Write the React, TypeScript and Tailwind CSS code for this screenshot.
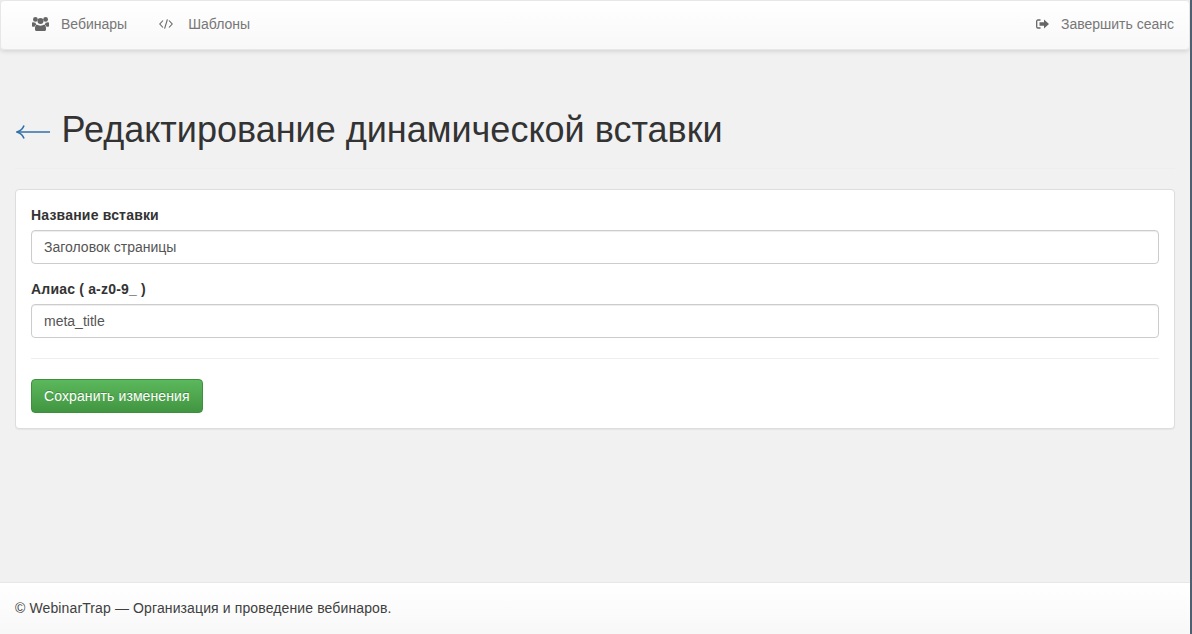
import React from 'react';

const UsersIcon = () => (
  <svg width="17" height="14" viewBox="0 0 17 14" fill="#666" className="ml-[2px] mr-[12px]">
    <circle cx="3.4" cy="2.4" r="2.4" />
    <circle cx="13.6" cy="2.4" r="2.4" />
    <circle cx="8.5" cy="4" r="3" />
    <path d="M0 6.2c0-.7.6-1 1.2-.9.7.3 1.5.5 2.4.4-.1.7.2 1.4.7 2-.9.3-1.5 1-1.8 2H1c-.6 0-1-.4-1-1z" />
    <path d="M17 6.2c0-.7-.6-1-1.2-.9-.7.3-1.5.5-2.4.4.1.7-.2 1.4-.7 2 .9.3 1.5 1 1.8 2H16c.6 0 1-.4 1-1z" />
    <path d="M4.9 7.6c.9.8 2.2 1.1 3.6 1.1s2.7-.3 3.6-1.1c1.100.4 1.900 1.700 1.900 3.400v1.500c0 .9-.6 1.500-1.500 1.500h-8c-.9 0-1.500-.6-1.500-1.500V11c0-1.700.8-3 1.900-3.400z" />
  </svg>
);

const CodeIcon = () => (
  <svg width="14" height="10" viewBox="0 0 14 10" fill="none" stroke="#666" strokeWidth="1.100" className="ml-[2px] mr-[15px]">
    <path d="M4 1.500L.8 5 4 8.500" />
    <path d="M10 1.500L13.200 5 10 8.500" />
    <path d="M8.400.3L5.600 9.700" />
  </svg>
);

const SignOutIcon = () => (
  <svg width="13" height="10" viewBox="0 0 13 10" className="mr-[12px]">
    <path d="M4.500 1H2C1.200 1 .7 1.500.7 2.300v5.400C.7 8.500 1.200 9 2 9h2.500" fill="none" stroke="#666" strokeWidth="1.300" />
    <path d="M3.500 3.300h4.500V.4L13 5 8 9.600V6.700H3.500z" fill="#666" />
  </svg>
);

const NavLink = ({ icon, label }: { icon: React.ReactNode; label: string }) => (
  <a className="flex h-[46px] items-center px-[15px] text-[14px] text-[#777]">
    {icon}
    {label}
  </a>
);

const Field = ({ label, value }: { label: string; value: string }) => (
  <div className="mb-[15px]">
    <label className="mb-[5px] block h-[20px] text-[14px] leading-[20px] font-bold tracking-[0.19px] text-[#333]">{label}</label>
    <input
      readOnly
      value={value}
      className="block h-[34px] w-full rounded-[4px] border border-[#ccc] bg-white px-[12px] text-[14px] text-[#555] shadow-[inset_0_1px_1px_rgba(0,0,0,0.075)] outline-none"
    />
  </div>
);

export default function App() {
  return (
    <div className="flex h-[634px] overflow-hidden bg-[#f1f1f1] font-['Liberation_Sans',Arial,sans-serif] text-[14px] text-[#333]">
      <div className="flex min-w-0 flex-1 flex-col">
        <nav className="flex h-[50px] shrink-0 items-center justify-between rounded-[4px] border border-[#e7e7e7] bg-gradient-to-b from-white to-[#f8f8f8] pb-[2px] pl-[14px] shadow-[0_1px_5px_rgba(0,0,0,0.15)]">
          <div className="flex">
            <NavLink icon={<UsersIcon />} label="Вебинары" />
            <NavLink icon={<CodeIcon />} label="Шаблоны" />
          </div>
          <NavLink icon={<SignOutIcon />} label="Завершить сеанс" />
        </nav>

        <main className="flex-1 px-[15px]">
          <div className="mt-[60px] mb-[20px] h-[59px] border-b border-[#eee]">
            <h1 className="flex h-[40px] items-center text-[36px] leading-[40px] font-normal text-[#333]">
              <a className="mt-[3px] ml-[1px] mr-[11.5px] block">
                <svg width="34" height="14" viewBox="0 0 34 14" fill="none" stroke="#2f6fa8" strokeWidth="1.600" className="block">
                  <path d="M1 7h33" />
                  <path d="M8 .5C7 3.500 4.500 5.800 1 7c3.500 1.200 6 3.500 7 6.500" />
                </svg>
              </a>
              Редактирование динамической вставки
            </h1>
          </div>

          <div className="rounded-[4px] border border-[#ddd] bg-white p-[15px] shadow-[0_1px_1px_rgba(0,0,0,0.05)]">
            <Field label="Название вставки" value="Заголовок страницы" />
            <Field label="Алиас ( a-z0-9_ )" value="meta_title" />
            <hr className="mt-[20px] mb-[20px] border-t border-[#eee]" />
            <button className="h-[34px] rounded-[4px] border border-[#3e8f3e] bg-gradient-to-b from-[#5cb85c] to-[#419641] px-[12px] text-[14px] tracking-[0.1px] text-white [text-shadow:0_-1px_0_rgba(0,0,0,0.2)]">
              Сохранить изменения
            </button>
          </div>
        </main>

        <footer className="flex h-[52px] shrink-0 items-center border-t border-[#e7e7e7] bg-gradient-to-b from-white to-[#f8f8f8] px-[15px] text-[14px] tracking-[0.12px] text-[#404040]">
          © WebinarTrap — Организация и проведение вебинаров.
        </footer>
      </div>
      <div className="w-[2px] shrink-0 bg-[#4d5f70]" />
    </div>
  );
}
